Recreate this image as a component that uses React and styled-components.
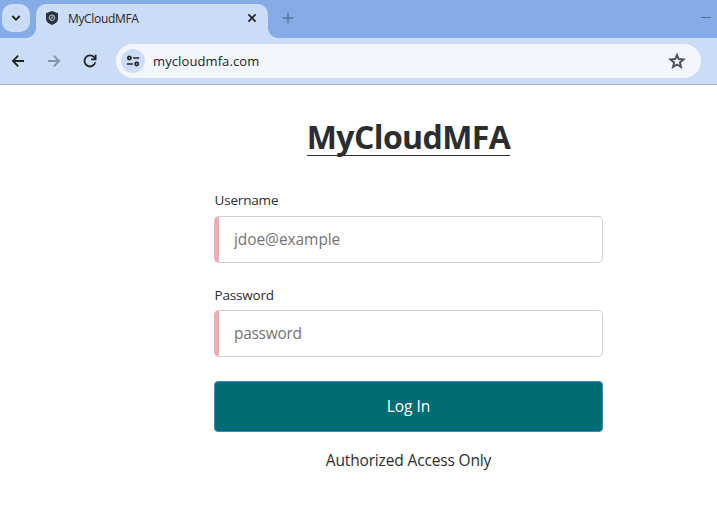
import React from 'react';
import styled, { createGlobalStyle } from 'styled-components';

const GlobalStyle = createGlobalStyle`
  * { box-sizing: border-box; }
  body {
    margin: 0;
    background: #fff;
    color: #2b2d2f;
    font-family: "Open Sans", "Noto Sans", sans-serif;
    overflow: hidden;
  }
`;

const Window = styled.div`
  display: flex;
  flex-direction: column;
  width: 717px;
  height: 509px;
`;

const TabStrip = styled.header`
  display: flex;
  height: 38px;
  padding: 4px 0 0 2px;
  background: #85ace9;
`;

const TabSearch = styled.button`
  display: grid;
  place-items: center;
  width: 28px;
  height: 28px;
  margin: 0 6px 0 0;
  padding: 0;
  border: 0;
  border-radius: 10px;
  background: #cbdcf6;
`;

const Tab = styled.div`
  position: relative;
  display: flex;
  align-items: center;
  width: 232px;
  height: 34px;
  padding: 0 10px 6px 9px;
  border-radius: 10px 10px 0 0;
  background: #cbdcf6;

  &::before,
  &::after {
    content: "";
    position: absolute;
    bottom: 0;
    width: 10px;
    height: 10px;
  }
  &::before {
    right: 100%;
    background: radial-gradient(circle at 0 0, transparent 9.5px, #cbdcf6 10.2px);
  }
  &::after {
    left: 100%;
    background: radial-gradient(circle at 100% 0, transparent 9.5px, #cbdcf6 10.2px);
  }
`;

const TabTitle = styled.span`
  flex: 1;
  margin-left: 9px;
  padding-top: 2px;
  font-size: 12px;
  line-height: 16px;
  letter-spacing: -0.34px;
  color: #24292f;
`;

const NewTab = styled.div`
  display: flex;
  flex: 1;
  padding: 8px 0 0 14px;
`;

const Minimize = styled.div`
  width: 10px;
  height: 1px;
  margin-top: 13px;
  margin-right: 6px;
  background: #526b92;
`;

const Toolbar = styled.nav`
  display: flex;
  align-items: center;
  height: 47px;
  padding: 0 16px 0 9px;
  border-bottom: 1px solid #a3b1c8;
  background: #cbdcf6;
`;

const NavIcon = styled.span`
  display: flex;
  width: 18px;
  margin-right: 18px;
`;

const AddressBar = styled.div`
  display: flex;
  flex: 1;
  align-items: center;
  height: 34px;
  margin-left: -1px;
  padding: 0 15px 0 5px;
  border-radius: 17px;
  background: #f3f7fd;
`;

const SiteInfo = styled.span`
  display: grid;
  place-items: center;
  width: 24px;
  height: 24px;
  border-radius: 50%;
  background: #cbdcf6;
`;

const Url = styled.span`
  flex: 1;
  margin-left: 8px;
  font-size: 13px;
  line-height: 18px;
  letter-spacing: 0.1px;
  color: #202327;
`;

const Page = styled.main`
  display: flex;
  flex-direction: column;
  align-items: center;
  width: 389px;
  margin-left: 214px;
`;

const Heading = styled.h1`
  height: 38px;
  margin: 33px 0 0;
  border-bottom: 1px solid #2b2d2f;
  font-size: 32px;
  font-weight: 700;
  line-height: 38px;
  letter-spacing: -0.6px;
  white-space: nowrap;
`;

const Form = styled.form`
  display: flex;
  flex-direction: column;
  width: 100%;
  margin-top: 34px;
`;

const Label = styled.label`
  height: ${(p) => p.$height};
  padding-left: 0.5px;
  font-size: 13.5px;
  line-height: 20px;
  letter-spacing: -0.18px;
`;

const Input = styled.input`
  width: 100%;
  height: 47px;
  margin: 0 0 ${(p) => p.$gap};
  padding: 0 15px 1px;
  border: 1px solid #cfcfcf;
  border-left: 5px solid #efacb4;
  border-radius: 5px;
  background: #fff;
  font: 15.5px "Open Sans", "Noto Sans", sans-serif;
  letter-spacing: ${(p) => p.$tracking};
  outline: none;

  &::placeholder { color: #757575; opacity: 1; }
`;

const Submit = styled.button`
  height: 51px;
  padding: 0 0 1px;
  border: 1px solid #3b8ac9;
  border-radius: 4px;
  background: #006d75;
  color: #fff;
  font: 15.5px "Open Sans", "Noto Sans", sans-serif;
`;

const Notice = styled.p`
  margin: 16px 0 0;
  font-size: 15.5px;
  line-height: 24px;
  letter-spacing: -0.15px;
  white-space: nowrap;
`;

function Icon({ size = 16, color = '#202327', width = 2, children }) {
  return (
    <svg width={size} height={size} viewBox={`0 0 ${size} ${size}`} fill="none" stroke={color} strokeWidth={width}>
      {children}
    </svg>
  );
}

export default function App() {
  return (
    <Window>
      <GlobalStyle />
      <TabStrip>
        <TabSearch type="button" aria-label="Search tabs">
          <Icon size={12} width={1.8}><path d="M2.3 4l3.7 3.7L9.7 4" /></Icon>
        </TabSearch>
        <Tab>
          <Icon size={14} color="none">
            <path d="M7 0l6 2.2v5.6c0 2.8-2.2 4.8-6 6.2-3.8-1.4-6-3.4-6-6.2V2.2z" fill="#2b323b" />
            <circle cx="7" cy="6.7" r="2.8" stroke="#b9c8df" strokeWidth="1" />
            <path d="M5.8 7.8l2.4-2.3" stroke="#b9c8df" strokeWidth="1.1" />
          </Icon>
          <TabTitle>MyCloudMFA</TabTitle>
          <Icon size={12} width={1.7}><path d="M2.4 2.4l7.2 7.2M9.6 2.4l-7.2 7.2" /></Icon>
        </Tab>
        <NewTab>
          <Icon size={12} color="#58759f" width={1.5}><path d="M6 .8v10.4M.8 6h10.4" /></Icon>
        </NewTab>
        <Minimize />
      </TabStrip>
      <Toolbar>
        <NavIcon><Icon size={18} width={1.8}><path d="M15 9H4.2M9.2 3.7L3.9 9l5.3 5.3" /></Icon></NavIcon>
        <NavIcon><Icon size={18} color="#8492a9" width={1.8}><path d="M3 9h10.8M8.8 3.7L14.1 9l-5.3 5.3" /></Icon></NavIcon>
        <NavIcon>
          <Icon size={18} width={1.8}>
            <path d="M14.3 10.3A5.5 5.5 0 1 1 13 5.2l1.3 1.4" />
            <path d="M14.6 2.8v4.5h-4.5" />
          </Icon>
        </NavIcon>
        <AddressBar>
          <SiteInfo>
            <Icon size={14} width={1.7}>
              <circle cx="3.4" cy="4" r="1.6" />
              <path d="M7.2 4h6M.9 10h6" />
              <circle cx="10.7" cy="10" r="1.6" />
            </Icon>
          </SiteInfo>
          <Url>mycloudmfa.com</Url>
          <Icon size={18} color="#4d5055" width={1.9}>
            <path d="M9 2.9l1.7 4.1 4.9.4-3.7 3 1.1 4.5L9 12.5l-4 2.4 1.1-4.5-3.7-3 4.9-.4z" />
          </Icon>
        </AddressBar>
      </Toolbar>
      <Page>
        <Heading>MyCloudMFA</Heading>
        <Form onSubmit={(e) => e.preventDefault()}>
          <Label htmlFor="username" $height="26px">Username</Label>
          <Input id="username" placeholder="jdoe@example" $gap="22px" $tracking="-0.08px" />
          <Label htmlFor="password" $height="25px">Password</Label>
          <Input id="password" type="password" placeholder="password" $gap="24px" $tracking="-0.3px" />
          <Submit type="submit">Log In</Submit>
        </Form>
        <Notice>Authorized Access Only</Notice>
      </Page>
    </Window>
  );
}
